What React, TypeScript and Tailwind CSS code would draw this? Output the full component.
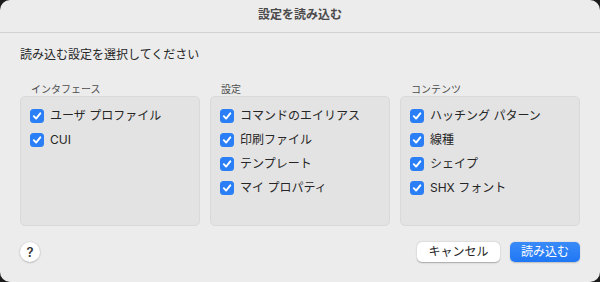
import React from "react";

const GROUPS: { title: string; items: string[] }[] = [
  { title: "インタフェース", items: ["ユーザ プロファイル", "CUI"] },
  { title: "設定", items: ["コマンドのエイリアス", "印刷ファイル", "テンプレート", "マイ プロパティ"] },
  { title: "コンテンツ", items: ["ハッチング パターン", "線種", "シェイプ", "SHX フォント"] },
];

function Check() {
  return (
    <span className="w-[14px] h-[14px] rounded-[3.5px] bg-[#2a7ff6] flex items-center justify-center shrink-0">
      <svg width="10" height="10" viewBox="0 0 10 10">
        <path d="M1.8 5.2 L4.1 7.6 L8.3 2.3" fill="none" stroke="white" strokeWidth="1.9" strokeLinecap="round" strokeLinejoin="round" />
      </svg>
    </span>
  );
}

export default function App() {
  return (
    <div className="w-[600px] h-[282px] bg-[#1c1c1c] font-['Inter','Noto_Sans_CJK_JP',sans-serif]">
      <div className="w-full h-full rounded-[10px] bg-[#ececec] overflow-hidden flex flex-col">
        {/* title bar */}
        <div className="h-[33px] border-b border-[#d2d2d2] flex items-center justify-center shrink-0">
          <span className="text-[12px] font-bold text-[#4a4a4a] leading-none -mt-[2px]">設定を読み込む</span>
        </div>

        <div className="px-5 flex flex-col">
          <p className="mt-[14px] text-[12px] leading-[16px] text-[#262626]">読み込む設定を選択してください</p>

          <div className="mt-[20px] grid grid-cols-3 gap-[10px]">
            {GROUPS.map((g) => (
              <div key={g.title} className="flex flex-col">
                <div className="pl-[11px] text-[10px] leading-[12px] text-[#4d4d4d]">{g.title}</div>
                <div className="mt-px h-[130px] rounded-[5px] bg-[#e3e3e3] border border-[#d9d9d9] pt-[7px] pl-[9px]">
                  {g.items.map((it) => (
                    <div key={it} className="h-[24px] flex items-center gap-[6px]">
                      <Check />
                      <span className="text-[12px] text-[#262626] leading-none">{it}</span>
                    </div>
                  ))}
                </div>
              </div>
            ))}
          </div>

          <div className="mt-[16px] flex items-center">
            <button className="w-[20px] h-[20px] rounded-full bg-white shadow-[0_0.5px_2px_rgba(0,0,0,0.3)] flex items-center justify-center text-[13px] font-semibold text-[#333] leading-none">
              ?
            </button>
            <div className="ml-auto flex gap-[10px]">
              <button className="w-[83px] h-[20px] rounded-[5px] bg-white shadow-[0_0.5px_1.5px_rgba(0,0,0,0.3)] text-[12px] text-[#262626] leading-none">
                キャンセル
              </button>
              <button className="w-[70px] h-[20px] rounded-[5px] bg-gradient-to-b from-[#3a8bf8] to-[#1f77f5] shadow-[0_0.5px_1.5px_rgba(0,0,0,0.2)] text-[12px] text-white leading-none">
                読み込む
              </button>
            </div>
          </div>
        </div>
      </div>
    </div>
  );
}
